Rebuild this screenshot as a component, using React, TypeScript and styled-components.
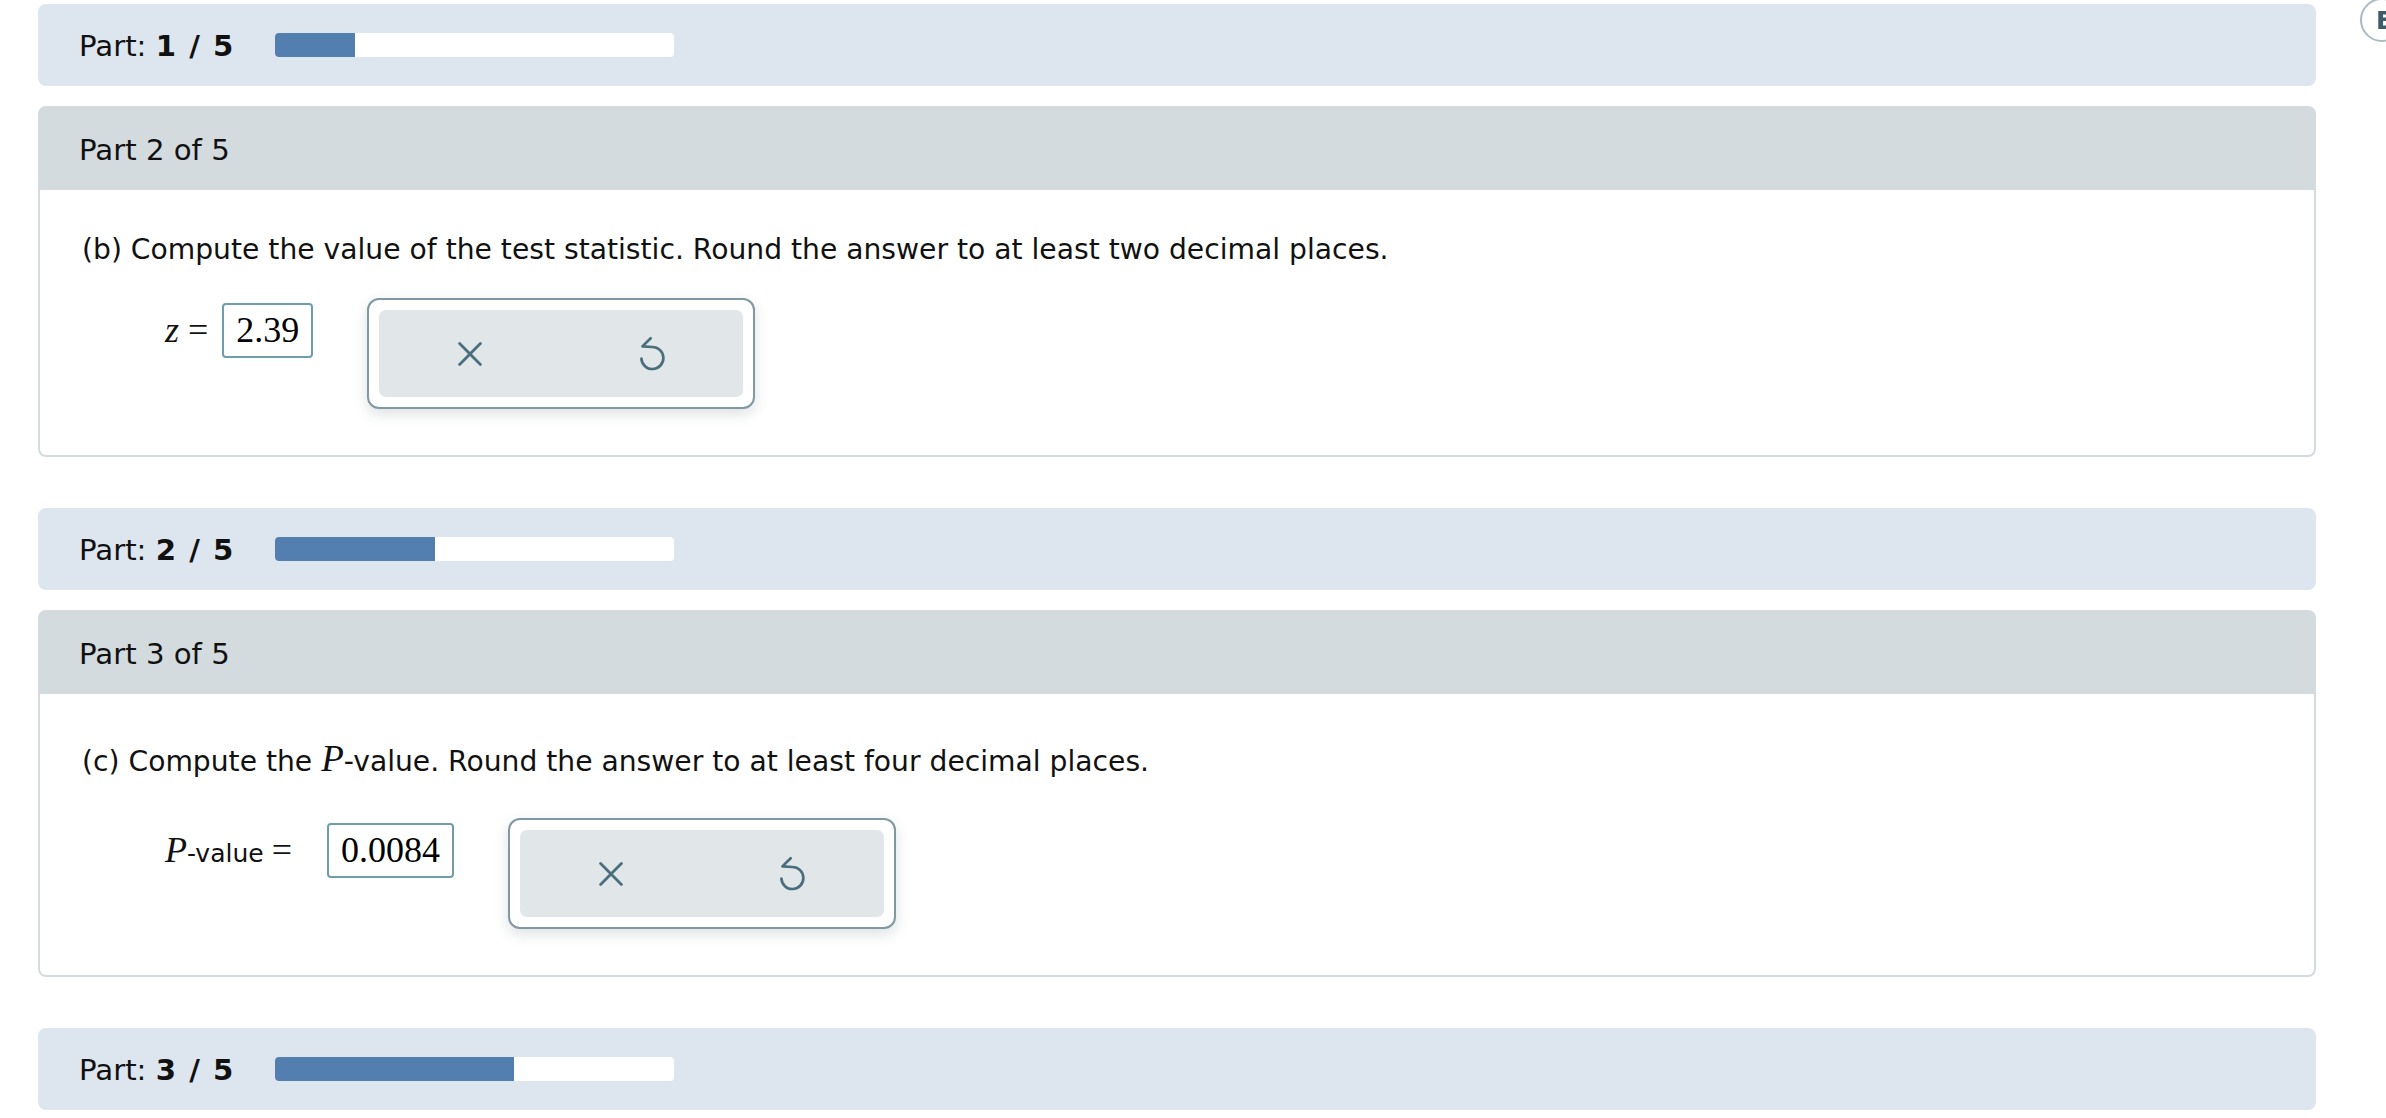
import React from "react";
import styled, { createGlobalStyle } from "styled-components";

const GlobalStyle = createGlobalStyle`
  html, body {
    margin: 0;
    padding: 0;
    background: #ffffff;
  }
  body {
    font-family: "DejaVu Sans", Verdana, sans-serif;
    color: #111111;
  }
`;

const Page = styled.main`
  width: 2278px;
  padding: 4px 0 0 38px;
  display: flex;
  flex-direction: column;
`;

const PartBar = styled.div`
  height: 82px;
  box-sizing: border-box;
  background: #dde6ee;
  border-radius: 8px;
  display: flex;
  align-items: center;
  padding-left: 41px;
  margin-bottom: 20px;
`;

const PartLabel = styled.div`
  min-width: 196px;
  font-size: 29.2px;
  line-height: 40px;
  padding-top: 2px;
  b {
    font-weight: 700;
  }
`;

const Slash = styled.span`
  margin: 0 3px;
`;

const Track = styled.div`
  width: 399px;
  height: 24px;
  background: #ffffff;
  border-radius: 4px;
  overflow: hidden;
`;

const Fill = styled.div<{ $pct: number }>`
  width: ${(p) => p.$pct}%;
  height: 100%;
  background: #527eb0;
`;

const Card = styled.section`
  margin-bottom: 51px;
`;

const CardHeader = styled.div`
  height: 84px;
  box-sizing: border-box;
  background: #d3dbdf;
  border-radius: 8px 8px 0 0;
  display: flex;
  align-items: center;
  padding: 4px 0 0 41px;
  font-size: 29.2px;
`;

const CardBody = styled.div<{ $top: number }>`
  border: 2px solid #d3dbdf;
  border-top: none;
  border-radius: 0 0 8px 8px;
  padding: ${(p) => p.$top}px 40px 46px 42px;
`;

const Question = styled.p`
  margin: 0;
  font-size: 28.2px;
  line-height: 40px;
`;

const MathVar = styled.span`
  font-family: "Liberation Serif", "Times New Roman", serif;
  font-style: italic;
  font-size: 37px;
  line-height: 0;
`;

const AnswerRow = styled.div<{ $gap: number }>`
  margin-top: ${(p) => p.$gap}px;
  padding-left: 83px;
  display: flex;
  align-items: flex-start;
`;

const AnswerField = styled.div`
  display: flex;
  align-items: baseline;
  margin-top: 5px;
  margin-right: 54px;
`;

const MathLabel = styled.span<{ $space: number }>`
  font-family: "Liberation Serif", "Times New Roman", serif;
  font-size: 36px;
  margin-right: ${(p) => p.$space}px;
  white-space: nowrap;
`;

const Italic = styled.i`
  font-style: italic;
`;

const TextPart = styled.span`
  font-family: "DejaVu Sans", Verdana, sans-serif;
  font-size: 25px;
`;

const Equals = styled.span<{ $left: number }>`
  margin-left: ${(p) => p.$left}px;
`;

const InputBox = styled.div`
  height: 55px;
  box-sizing: border-box;
  border: 2px solid #6e9dad;
  border-radius: 4px;
  padding: 0 12px;
  font-family: "Liberation Serif", "Times New Roman", serif;
  font-size: 36px;
  line-height: 51px;
  color: #000;
`;

const ActionBox = styled.div`
  width: 388px;
  height: 111px;
  box-sizing: border-box;
  border: 2px solid #7f98a2;
  border-radius: 12px;
  background: #ffffff;
  padding: 10px;
  box-shadow: 0 5px 14px rgba(40, 62, 74, 0.16);
`;

const ButtonGroup = styled.div`
  height: 100%;
  display: grid;
  grid-template-columns: 1fr 1fr;
  background: #e1e6e9;
  border-radius: 7px;
`;

const IconButton = styled.button`
  border: none;
  background: transparent;
  padding: 0;
  display: flex;
  align-items: center;
  justify-content: center;
  cursor: pointer;
  color: #4a6f7c;
`;

const CircleButton = styled.button`
  position: fixed;
  top: -2px;
  right: -18px;
  width: 44px;
  height: 44px;
  box-sizing: border-box;
  border-radius: 50%;
  border: 2px solid #a9bbc2;
  background: #ffffff;
  color: #3e5d69;
  font-family: "DejaVu Sans", Verdana, sans-serif;
  font-weight: 700;
  font-size: 25px;
  padding: 0 0 0 2px;
  display: flex;
  align-items: center;
  justify-content: flex-start;
  text-indent: 12px;
`;

const ClearIcon = () => (
  <svg width="24" height="24" viewBox="0 0 24 24" fill="none">
    <path
      d="M1.6 1.6 L22.4 22.4 M22.4 1.6 L1.6 22.4"
      stroke="currentColor"
      strokeWidth="2.8"
      strokeLinecap="round"
    />
  </svg>
);

const UndoIcon = () => (
  <svg width="27" height="36" viewBox="0 0 27 36" fill="none">
    <path
      d="M11.7 2.3 L3.4 10.4 L13.3 11 A11 11 0 1 1 2.4 22.6"
      stroke="currentColor"
      strokeWidth="2.7"
      strokeLinecap="round"
      strokeLinejoin="round"
    />
  </svg>
);

const Progress = ({ part, total }: { part: number; total: number }) => (
  <PartBar>
    <PartLabel>
      Part:{" "}
      <b>
        {part} <Slash>/</Slash> {total}
      </b>
    </PartLabel>
    <Track>
      <Fill $pct={(part / total) * 100} />
    </Track>
  </PartBar>
);

const Actions = () => (
  <ActionBox>
    <ButtonGroup>
      <IconButton aria-label="Clear">
        <ClearIcon />
      </IconButton>
      <IconButton aria-label="Undo">
        <UndoIcon />
      </IconButton>
    </ButtonGroup>
  </ActionBox>
);

export default function App() {
  return (
    <>
      <GlobalStyle />
      <CircleButton>E</CircleButton>
      <Page>
        <Progress part={1} total={5} />
        <Card>
          <CardHeader>Part 2 of 5</CardHeader>
          <CardBody $top={40}>
            <Question>
              (b) Compute the value of the test statistic. Round the answer to at least two decimal places.
            </Question>
            <AnswerRow $gap={28}>
              <AnswerField>
                <MathLabel $space={14}>
                  <Italic>z</Italic>
                  <Equals $left={9}>=</Equals>
                </MathLabel>
                <InputBox>2.39</InputBox>
              </AnswerField>
              <Actions />
            </AnswerRow>
          </CardBody>
        </Card>
        <Progress part={2} total={5} />
        <Card>
          <CardHeader>Part 3 of 5</CardHeader>
          <CardBody $top={48}>
            <Question>
              (c) Compute the <MathVar>P</MathVar>-value. Round the answer to at least four decimal places.
            </Question>
            <AnswerRow $gap={36}>
              <AnswerField>
                <MathLabel $space={35}>
                  <Italic>P</Italic>
                  <TextPart>-value</TextPart>
                  <Equals $left={8}>=</Equals>
                </MathLabel>
                <InputBox>0.0084</InputBox>
              </AnswerField>
              <Actions />
            </AnswerRow>
          </CardBody>
        </Card>
        <Progress part={3} total={5} />
      </Page>
    </>
  );
}
